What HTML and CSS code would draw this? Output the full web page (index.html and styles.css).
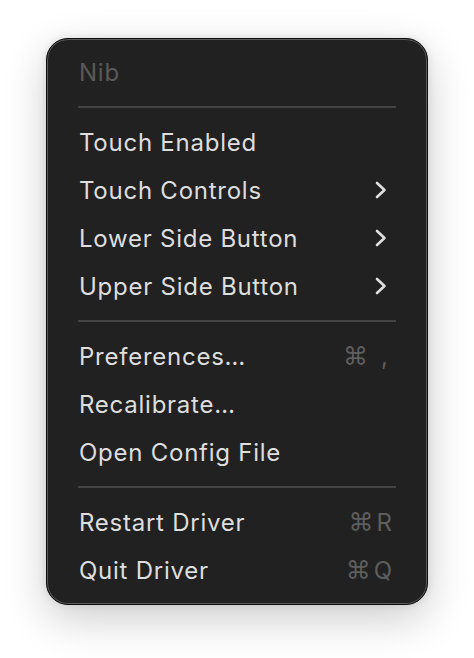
FILE: index.html
```html
<!DOCTYPE html>
<html lang="en">
<head>
<meta charset="utf-8">
<title>Nib</title>
<link rel="stylesheet" href="styles.css">
</head>
<body>
<div class="menu">
  <div class="item header">Nib</div>
  <div class="sep"></div>
  <div class="item">Touch Enabled</div>
  <div class="item"><span>Touch Controls</span><svg class="chev" viewBox="0 0 12 18"><path d="M2 2l7.5 7-7.5 7"/></svg></div>
  <div class="item"><span>Lower Side Button</span><svg class="chev" viewBox="0 0 12 18"><path d="M2 2l7.5 7-7.5 7"/></svg></div>
  <div class="item"><span>Upper Side Button</span><svg class="chev" viewBox="0 0 12 18"><path d="M2 2l7.5 7-7.5 7"/></svg></div>
  <div class="sep"></div>
  <div class="item"><span>Preferences…</span><span class="key"><span class="cmd">⌘</span><span class="comma">,</span></span></div>
  <div class="item">Recalibrate…</div>
  <div class="item">Open Config File</div>
  <div class="sep"></div>
  <div class="item"><span>Restart Driver</span><span class="key"><span class="cmd">⌘</span>R</span></div>
  <div class="item"><span>Quit Driver</span><span class="key"><span class="cmd">⌘</span>Q</span></div>
</div>
</body>
</html>
```
FILE: styles.css
```css
html, body {
  margin: 0;
  background: #ffffff;
}

body {
  box-sizing: border-box;
  min-height: 658px;
  padding: 38px 0 54px 46px;
  font-family: Inter, "Noto Sans", sans-serif;
}

.menu {
  box-sizing: border-box;
  width: 382px;
  padding: 9px 0 10px;
  background: #212121;
  border: 1px solid #0c0c0c;
  border-radius: 22px;
  box-shadow: inset 0 0 0 1px #5c5c5c, 0 14px 44px rgba(0, 0, 0, 0.2), 0 0 8px rgba(0, 0, 0, 0.1);
}

.item {
  height: 48px;
  display: flex;
  align-items: center;
  justify-content: space-between;
  padding: 0 40px 0 32px;
  font-size: 24px;
  color: #dedede;
  letter-spacing: 0.75px;
}

.header {
  color: #595959;
}

.sep {
  height: 2px;
  margin: 10px 31px 10px;
  background: #444444;
}

.chev {
  width: 12px;
  height: 18px;
  fill: none;
  stroke: #dedede;
  stroke-width: 2.6;
  stroke-linecap: round;
  stroke-linejoin: round;
}

.key {
  display: flex;
  align-items: center;
  gap: 3px;
  color: #5e5e5e;
  margin-right: -5px;
  letter-spacing: 0;
}

.cmd {
  font-family: "DejaVu Sans", sans-serif;
  font-size: 25px;
}

.comma {
  margin-left: 10px;
  margin-right: 4px;
}
```
